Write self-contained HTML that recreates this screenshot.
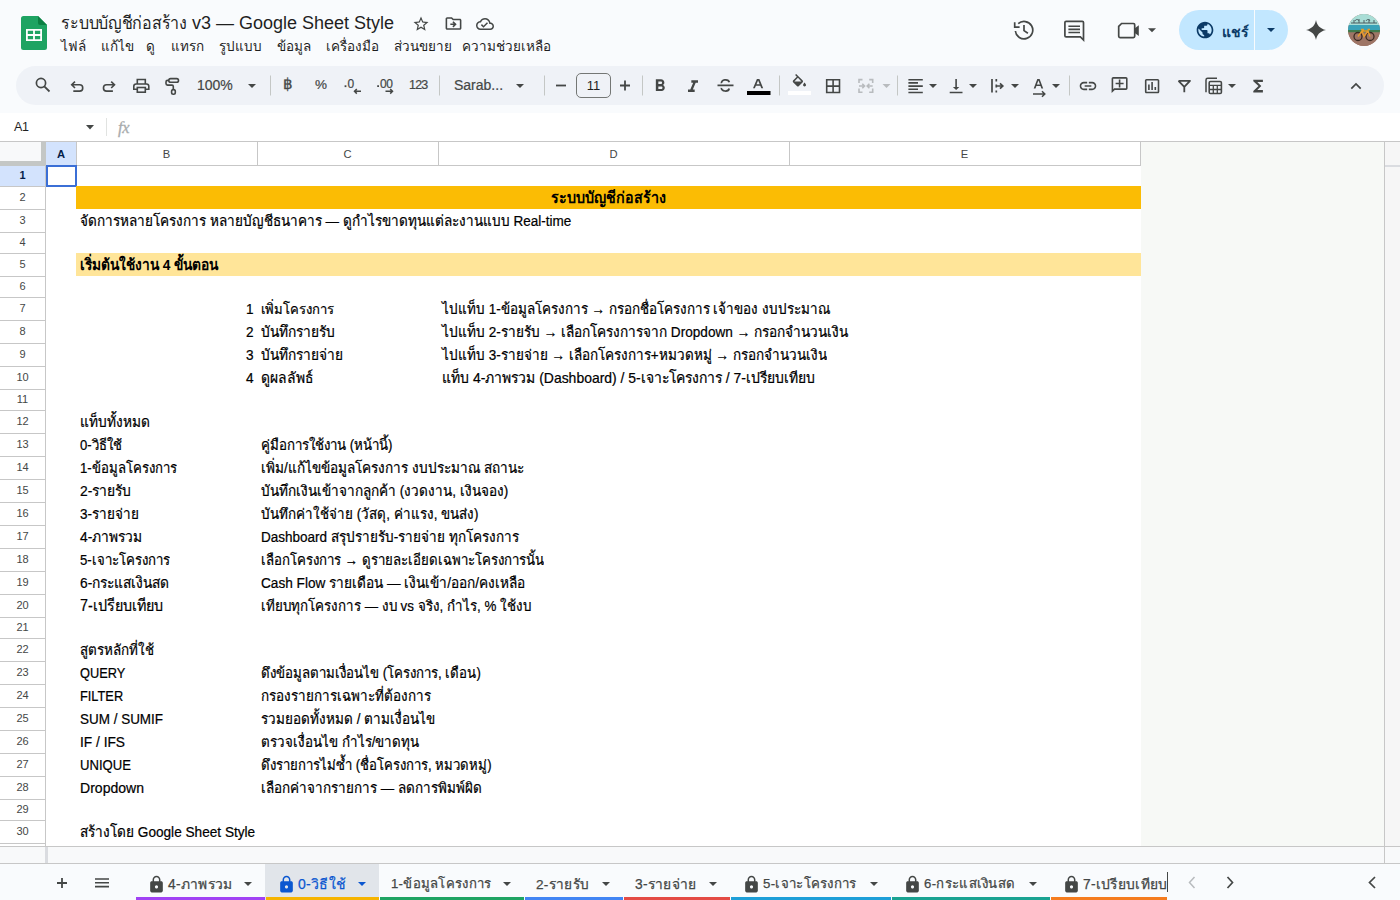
<!DOCTYPE html>
<html><head><meta charset="utf-8">
<style>
*{box-sizing:border-box;margin:0;padding:0}
html,body{width:1400px;height:900px;overflow:hidden;background:#f9fbfd;font-family:"Liberation Sans",sans-serif;color:#1f1f1f;position:relative}
.a{position:absolute;white-space:nowrap}
svg{position:absolute;display:block}
.ic{fill:#444746}
.tb{position:absolute;left:16px;top:65.5px;width:1368px;height:39.5px;background:#eff2f7;border-radius:20px}
.sep{position:absolute;top:75px;width:1px;height:20px;background:#c7c7c7}
.menu{top:35px;font-size:13.5px;color:#1f1f1f}
.fb{position:absolute;left:0;top:113px;width:1400px;height:29px;background:#fff}
.grid{position:absolute;left:0;top:141px;width:1400px;height:723px;background:#fff}
.ch{position:absolute;top:141px;height:25px;border-top:1px solid #c7c7c7;border-bottom:1px solid #c7c7c7;border-right:1px solid #c7c7c7;background:#fff;font-size:12px;color:#444746;text-align:center;line-height:23px}
.rh{position:absolute;left:0;width:46px;border-right:1px solid #c7c7c7;border-bottom:1px solid #c7c7c7;background:#fff;font-size:11px;color:#444746;text-align:center}
.c{position:absolute;font-size:14px;color:#000;white-space:nowrap;line-height:23px;-webkit-text-stroke:0.2px #000;transform:scaleY(1.1);transform-origin:0 16.5px;margin-top:1px}
.tab{position:absolute;top:864px;height:36px;font-size:14px;color:#444746;letter-spacing:0.6px}
.tab .bar{position:absolute;left:0;right:0;bottom:0;height:4px}
</style></head><body>

<!-- ===== HEADER ===== -->
<svg style="left:21px;top:16px" width="26" height="34" viewBox="0 0 26 34">
<path d="M2.5 0H17L26 9V31.5A2.5 2.5 0 0 1 23.5 34H2.5A2.5 2.5 0 0 1 0 31.5V2.5A2.5 2.5 0 0 1 2.5 0Z" fill="#0f9d58" style="fill:#1ea362"/>
<path d="M17 0L26 9H19A2 2 0 0 1 17 7Z" fill="#0b8043"/>
<path d="M5 13H21V25H5ZM6.8 14.8V18.1H12.1V14.8ZM13.9 14.8V18.1H19.2V14.8ZM6.8 19.9V23.2H12.1V19.9ZM13.9 19.9V23.2H19.2V19.9Z" fill="#fff" fill-rule="evenodd"/>
</svg>
<div class="a" style="left:61px;top:8px;font-size:18px;color:#1f1f1f;transform:scaleX(0.89);transform-origin:0 0">ระบบบัญชีก่อสร้าง</div>
<div class="a" style="left:192px;top:13px;font-size:18px;color:#1f1f1f">v3 — Google Sheet Style</div>


<svg style="left:412px;top:14.5px" width="18" height="18" viewBox="0 0 24 24"><path class="ic" d="M22 9.24l-7.19-.62L12 2 9.19 8.63 2 9.24l5.46 4.73L5.82 21 12 17.27 18.18 21l-1.63-7.03L22 9.24zM12 15.4l-3.76 2.27 1-4.28-3.32-2.88 4.38-.38L12 6.1l1.71 4.04 4.38.38-3.32 2.88 1 4.28L12 15.4z"/></svg>
<svg style="left:443.5px;top:14.3px" width="19" height="19" viewBox="0 0 24 24"><path class="ic" d="M20 6h-8l-2-2H4c-1.1 0-1.99.9-1.99 2L2 18c0 1.1.9 2 2 2h16c1.1 0 2-.9 2-2V8c0-1.1-.9-2-2-2zm0 12H4V6h5.17l2 2H20v10zm-7.84-6H8v2h4.16l-1.59 1.59L11.99 17 16 13.01 11.99 9l-1.41 1.41L12.16 12z"/></svg>
<svg style="left:476px;top:14.8px" width="18" height="18" viewBox="0 0 24 24"><path class="ic" d="M19.35 10.04C18.67 6.59 15.64 4 12 4 9.11 4 6.6 5.64 5.35 8.04 2.34 8.36 0 10.91 0 14c0 3.31 2.69 6 6 6h13c2.76 0 5-2.24 5-5 0-2.64-2.05-4.78-4.65-4.96zM19 18H6c-2.21 0-4-1.79-4-4 0-2.05 1.53-3.76 3.56-3.97l1.07-.11.5-.95C8.08 7.14 9.94 6 12 6c2.62 0 4.88 1.86 5.39 4.43l.3 1.5 1.53.11c1.56.1 2.78 1.41 2.78 2.96 0 1.65-1.35 3-3 3zM10 14.17l-2.09-2.09L6.5 13.5 10 17l6.01-6.01-1.41-1.41z"/></svg>

<div class="a menu" style="left:61px">ไฟล์</div>
<div class="a menu" style="left:101px">แก้ไข</div>
<div class="a menu" style="left:146px">ดู</div>
<div class="a menu" style="left:171px">แทรก</div>
<div class="a menu" style="left:219px">รูปแบบ</div>
<div class="a menu" style="left:277px">ข้อมูล</div>
<div class="a menu" style="left:326px">เครื่องมือ</div>
<div class="a menu" style="left:394px">ส่วนขยาย</div>
<div class="a menu" style="left:462px">ความช่วยเหลือ</div>

<!-- right header -->
<svg style="left:1000px;top:10px" width="170" height="40" viewBox="1000 10 170 40"><g fill="none" stroke="#444746" stroke-width="1.7">
<path d="M1015.4 31A8.7 8.7 0 1 0 1018.2 23.7"/><path d="M1014.7 22.3V27.2H1019.6"/><path d="M1024 25V30.6L1027.9 33.2"/>
<path d="M1064.9 22.6A1.2 1.2 0 0 1 1066.1 21.4H1082.3A1.2 1.2 0 0 1 1083.5 22.6V40L1080.4 36.9H1066.1A1.2 1.2 0 0 1 1064.9 35.7Z"/>
<path d="M1068.4 26.3H1080M1068.4 29.4H1080M1068.4 32.5H1080" stroke-width="1.6"/>
<path d="M1121.6 23.5H1133.4A1.3 1.3 0 0 1 1134.7 24.8V36.3A1.3 1.3 0 0 1 1133.4 37.6H1120A1.3 1.3 0 0 1 1118.7 36.3V26.4Z"/>
</g><g fill="#444746"><path d="M1134.5 28.5L1138.8 25.3V35.9L1134.5 32.7Z"/><path d="M1148 28.3H1156L1152 32.3Z"/></g></svg>
<div class="a" style="left:1179px;top:10px;width:109px;height:40px;border-radius:20px;background:#c2e7ff"></div>
<div class="a" style="left:1254px;top:10px;width:1px;height:40px;background:#f9fbfd"></div>
<svg style="left:1195px;top:20px" width="20" height="20" viewBox="0 0 24 24"><path fill="#0b3a66" d="M12 2C6.48 2 2 6.48 2 12s4.48 10 10 10 10-4.48 10-10S17.52 2 12 2zm-1 17.93c-3.950-.49-7-3.850-7-7.93 0-.62.08-1.21.21-1.79L9 15v1c0 1.1.9 2 2 2v1.93zm6.9-2.54c-.26-.81-1-1.39-1.9-1.39h-1v-3c0-.55-.45-1-1-1H8v-2h2c.55 0 1-.45 1-1V7h2c1.1 0 2-.9 2-2v-.41c2.93 1.19 5 4.06 5 7.41 0 2.08-.8 3.97-2.1 5.39z"/></svg>
<div class="a" style="left:1222px;top:21px;font-size:14px;font-weight:bold;color:#0b3a66">แชร์</div>
<svg style="left:1260px;top:20px" width="22" height="20" viewBox="0 0 22 20"><path fill="#0b3a66" d="M7 8H15L11 12Z"/></svg>
<svg style="left:1304px;top:18px" width="24" height="24" viewBox="0 0 24 24"><path fill="#444746" d="M12 2C12.9 7.1 15.8 10.6 22 12 15.8 13.4 12.9 16.9 12 22 11.1 16.9 8.2 13.4 2 12 8.2 10.6 11.1 7.1 12 2Z"/></svg>
<svg style="left:1348px;top:14px" width="32" height="32" viewBox="0 0 32 32"><defs><clipPath id="av"><circle cx="16" cy="16" r="16"/></clipPath></defs>
<g clip-path="url(#av)">
<rect width="32" height="32" fill="#a07a6b"/>
<rect width="32" height="11" fill="#a9ddd6"/>
<path d="M3 9h26M6 6v3M11 5v4M16 6v3M21 5v4M26 6v3M7 7c1-2 3-2 4 0M18 7c1-2 3-2 4 0" stroke="#4a5c60" stroke-width="1" fill="none"/>
<rect y="11" width="32" height="5" fill="#3aa2b8"/>
<rect y="16" width="32" height="2.5" fill="#3f7a4c"/>
<rect y="18.5" width="32" height="14" fill="#9e7566"/>
<circle cx="10" cy="22.5" r="4" fill="none" stroke="#3b2a22" stroke-width="1.3"/>
<circle cx="22" cy="22.5" r="4" fill="none" stroke="#3b2a22" stroke-width="1.3"/>
<path d="M10 22.5L14 17H20L22 22.5M14 17L16 22.5 20 17M13 15.5H16M19.5 15.5H22" stroke="#e79a2c" stroke-width="1.4" fill="none"/>
</g></svg>


<!-- ===== TOOLBAR ===== -->
<div class="tb"></div>
<svg style="left:0;top:0" width="1400" height="110" viewBox="0 0 1400 110">
<g fill="none" stroke="#444746" stroke-width="1.6" stroke-linecap="butt" stroke-linejoin="miter">
<!-- search -->
<circle cx="41" cy="83" r="4.6" stroke-width="1.7"/><path d="M44.3 86.3L49.5 91.5" stroke-width="1.8"/>
<!-- undo -->
<path d="M75 81.6L71.7 84.8 75 88M72 84.8H79.6A3.15 3.15 0 0 1 79.6 91.1H73.3"/>
<!-- redo -->
<path d="M111.2 81.6L114.5 84.8 111.2 88M114.2 84.8H106.6A3.15 3.15 0 0 0 106.6 91.1H112.9"/>
<!-- print -->
<path d="M137.3 83.8V79.5H145.3V83.8M137.3 89.3H133.8V86.3A2.3 2.3 0 0 1 136.1 84H146.5A2.3 2.3 0 0 1 148.8 86.3V89.3H145.3"/><rect x="137.3" y="87.5" width="8" height="4.7"/>
<!-- paint format -->
<rect x="168.8" y="78.6" width="9.7" height="3.6" rx="1.8"/><path d="M168.8 80.4H167.5A1.5 1.5 0 0 0 166 81.9V83.6A1.5 1.5 0 0 0 167.5 85.1H172A1.3 1.3 0 0 1 173.3 86.4V89.4"/><rect x="171.6" y="89.6" width="3.7" height="4.6" rx="1.7"/>
<!-- strikethrough -->
<path d="M717.5 85.3H733.5M721.5 83.3A3.7 2.7 0 0 1 729.3 82.3M721.4 87.8A3.7 2.7 0 0 0 729.2 88.5" stroke-width="1.7"/>
<!-- merge (disabled) -->
<path stroke="#b8bbbe" d="M859 83V79.6H862.5M859 88.5V92.3H862.5M872.7 83V79.6H869.2M872.7 88.5V92.3H869.2M859 86H864.5M862.3 83.8L864.5 86 862.3 88.2M872.7 86H867.2M869.4 83.8L867.2 86 869.4 88.2"/>
<!-- wrap -->
<path d="M992 79V92.5M996.3 79V81.5M996.3 84.5V87.5M996.3 90.5V92.5M996.5 86H1002.5M1000 83.3L1002.8 86 1000 88.7" stroke-width="1.7"/>
<!-- rotate A -->
<path d="M1033 94H1044.5M1042 91.3L1044.8 94 1042 96.7" stroke-width="1.5"/>
<!-- filter -->
<path d="M1178.5 80.8H1190L1184.3 86.8V92.2M1178.5 80.8L1184.3 86.8" stroke-width="1.8" stroke-linejoin="round"/>
<!-- functions/calc -->
<path d="M1206 92.3V80A1.7 1.7 0 0 1 1207.7 78.3H1217" stroke-width="1.5"/>
<rect x="1209.2" y="81.5" width="12.2" height="12" rx="1.3" stroke-width="1.6"/>
<path d="M1209.2 85.3H1221.4M1209.2 89.5H1221.4M1213.3 85.3V93.5M1217.3 85.3V93.5" stroke-width="1.3"/>
<!-- collapse ^ -->
<path d="M1351.3 88.7L1356 84 1360.7 88.7" stroke-width="1.7"/>
</g>
<g fill="#444746">
<!-- link -->
<path transform="translate(1078 76) scale(0.8333)" d="M3.9 12c0-1.71 1.39-3.1 3.1-3.1h4V7H7c-2.76 0-5 2.24-5 5s2.24 5 5 5h4v-1.9H7c-1.71 0-3.1-1.39-3.1-3.1zM8 13h8v-2H8v2zm9-6h-4v1.9h4c1.71 0 3.1 1.39 3.1 3.1s-1.39 3.1-3.1 3.1h-4V17h4c2.76 0 5-2.24 5-5s-2.24-5-5-5z"/>
<!-- B -->
<path transform="translate(650 76) scale(0.8333)" d="M15.6 10.79c.97-.67 1.65-1.77 1.65-2.79 0-2.26-1.75-4-4-4H7v14h7.04c2.09 0 3.71-1.7 3.71-3.79 0-1.52-.86-2.82-2.15-3.42zM10 6.5h3c.83 0 1.5.67 1.5 1.5s-.67 1.5-1.5 1.5h-3v-3zm3.5 9H10v-3h3.5c.83 0 1.5.67 1.5 1.5s-.67 1.5-1.5 1.5z"/>
<!-- I -->
<path transform="translate(683 77) scale(0.8333)" d="M10 4v3h2.21l-3.42 8H6v3h8v-3h-2.21l3.42-8H18V4z"/>
<!-- text color A -->
<path d="M756.9 79H759.4L763.2 88.3H761.3L760.3 85.8H755.9L754.9 88.3H753ZM756.5 84.3H759.7L758.1 80.6Z"/>
<rect x="747" y="91" width="23.5" height="4" fill="#000"/>
<!-- fill -->
<path transform="translate(790.5 74) scale(0.74)" d="M16.56 8.94L7.62 0 6.21 1.41l2.38 2.38-5.15 5.15c-.59.59-.59 1.54 0 2.12l5.5 5.5c.29.29.68.44 1.06.44s.77-.15 1.06-.44l5.5-5.5c.59-.58.59-1.53 0-2.12zM5.21 10L10 5.21 14.79 10H5.21zM19 11.5s-2 2.17-2 3.5c0 1.1.9 2 2 2s2-.9 2-2c0-1.33-2-3.5-2-3.5z"/>
<rect x="788" y="91" width="23" height="4" fill="#fff"/>
<!-- borders -->
<path transform="translate(823.5 76.5) scale(0.8)" d="M3 3v18h18V3H3zm8 16H5v-6h6v6zm0-8H5V5h6v6zm8 8h-6v-6h6v6zm0-8h-6V5h6v6z"/>
<!-- align left -->
<path transform="translate(906 76.5) scale(0.8)" d="M15 15H3v2h12v-2zm0-8H3v2h12V7zM3 13h18v-2H3v2zm0 8h18v-2H3v2zM3 3v2h18V3H3z"/>
<!-- valign bottom -->
<path transform="translate(946.5 76.5) scale(0.8)" d="M16 13h-3V3h-2v10H8l4 4 4-4zM4 19v2h16v-2H4z"/>
<!-- rotate A letter -->
<path d="M1037.3 79H1039.6L1043.2 88.5H1041.4L1040.5 86H1036.4L1035.5 88.5H1033.7ZM1036.9 84.5H1040L1038.45 80.6Z"/>
<!-- comment add -->
<path transform="translate(1110 75.5) scale(0.8) translate(24 0) scale(-1 1)" d="M22 4c0-1.1-.9-2-2-2H4c-1.1 0-1.99.9-1.99 2L2 16c0 1.1.9 2 2 2h14l4 4V4zm-2 13.17L18.83 16H4V4h16v13.17zM13 5h-2v4H7v2h4v4h2v-4h4V9h-4z"/>
<!-- chart -->
<path transform="translate(1142.5 76.5) scale(0.8)" d="M19 3H5c-1.1 0-2 .9-2 2v14c0 1.1.9 2 2 2h14c1.1 0 2-.9 2-2V5c0-1.1-.9-2-2-2zm0 16H5V5h14v14zM7 10h2v7H7zm4-3h2v10h-2zm4 6h2v4h-2z"/>
<!-- sigma -->
<path transform="translate(1248.5 76.5) scale(0.8)" d="M18 4H6v2l6.5 6L6 18v2h12v-3h-7l5-5-5-5h7z"/>
<!-- dropdown arrows -->
<path d="M248 84H256L252 88Z"/>
<path d="M516 84H524L520 88Z"/>
<path d="M929 84H937L933 88Z"/>
<path d="M969 84H977L973 88Z"/>
<path d="M1011 84H1019L1015 88Z"/>
<path d="M1052 84H1060L1056 88Z"/>
<path d="M1228 84H1236L1232 88Z"/>
<path fill="#b8bbbe" d="M882.5 84H890.5L886.5 88Z"/>
<!-- .0 arrows -->
<path d="M344.6 85.3h1.8v1.8h-1.8z"/><path d="M377.2 85.3h1.8v1.8h-1.8z"/>
</g>
<g fill="none" stroke="#444746" stroke-width="1.5">
<path d="M361 91.3H354.5M356.8 89L354.5 91.3 356.8 93.6"/>
<path d="M385.5 91.3H392.5M390.2 89L392.5 91.3 390.2 93.6"/>
<!-- minus plus -->
<path d="M556 85.5H566" stroke-width="1.8"/>
<path d="M620 85.5H630M625 80.5V90.5" stroke-width="1.8"/>
</g>
<g fill="#c4c7c5">
<rect x="270" y="75.5" width="1" height="20"/>
<rect x="439" y="75.5" width="1" height="20"/>
<rect x="544" y="75.5" width="1" height="20"/>
<rect x="642" y="75.5" width="1" height="20"/>
<rect x="779" y="75.5" width="1" height="20"/>
<rect x="897" y="75.5" width="1" height="20"/>
<rect x="1069" y="75.5" width="1" height="20"/>
</g>
<rect x="576.5" y="73.5" width="34" height="24" rx="4.5" fill="none" stroke="#747775" stroke-width="1"/>
</svg>
<div class="a" style="left:197px;top:77px;font-size:14px;color:#444746;-webkit-text-stroke:0.2px #444746">100%</div>
<div class="a" style="left:283px;top:76px;font-size:14.5px;color:#444746;-webkit-text-stroke:0.3px #444746">฿</div>
<div class="a" style="left:315px;top:77px;font-size:13.5px;color:#444746;-webkit-text-stroke:0.2px #444746">%</div>
<div class="a" style="left:347.5px;top:77px;font-size:12px;color:#444746;-webkit-text-stroke:0.2px #444746">0</div>
<div class="a" style="left:380px;top:77px;font-size:12px;color:#444746;letter-spacing:-0.4px;-webkit-text-stroke:0.2px #444746">00</div>
<div class="a" style="left:409px;top:78px;font-size:12.5px;color:#444746;letter-spacing:-0.8px;-webkit-text-stroke:0.2px #444746">123</div>
<div class="a" style="left:454px;top:77px;font-size:14px;color:#444746;-webkit-text-stroke:0.2px #444746">Sarab...</div>
<div class="a" style="left:576px;top:73px;width:35px;height:25px;font-size:13px;color:#1f1f1f;text-align:center;line-height:25px">11</div>

<!-- ===== FORMULA BAR ===== -->
<div class="fb"></div>
<div class="a" style="left:14px;top:120px;font-size:12.5px;letter-spacing:-0.4px;color:#1f1f1f">A1</div>
<svg style="left:80px;top:118px" width="20" height="18" viewBox="0 0 20 18"><path fill="#444746" d="M6 7H14L10 11.5Z"/></svg>
<div class="a" style="left:106px;top:118px;width:1px;height:18px;background:#e1e3e1"></div>
<div class="a" style="left:118px;top:118px;font-size:16.5px;font-style:italic;color:#a8abad;font-family:'Liberation Serif',serif;letter-spacing:-0.3px;-webkit-text-stroke:0.3px #a8abad">fx</div>

<!-- ===== GRID ===== -->
<div class="a" style="left:0;top:141px;width:1400px;height:723px;background:#fff"></div>
<div class="a" style="left:1141px;top:142px;width:244px;height:704px;background:#f7f9f6"></div>
<div class="a" style="left:1384px;top:141px;width:1px;height:722px;background:#c7c7c7"></div>
<div class="a" style="left:1385px;top:142px;width:15px;height:704px;background:#f6f6f6"></div>
<div class="a" style="left:1385px;top:165px;width:15px;height:2px;background:#dadce0"></div>
<div class="a" style="left:0;top:141px;width:1400px;height:1px;background:#c7c7c7"></div>
<div class="a" style="left:0;top:165px;width:1141px;height:1px;background:#c7c7c7"></div>
<!-- corner -->
<div class="a" style="left:0;top:142px;width:46px;height:23px;background:#f8f9fa"></div>
<div class="a" style="left:41px;top:142px;width:5px;height:23px;background:#c4c7c5"></div>
<div class="a" style="left:0;top:161px;width:46px;height:5px;background:#c4c7c5"></div>
<!-- col headers -->
<div class="a" style="left:46px;top:142px;width:30px;height:23px;background:#d3e3fd"></div>

<div class="a" style="left:46px;top:142px;width:30px;height:23px;line-height:24px;text-align:center;font-size:11.2px;font-weight:bold;color:#041e49">A</div>
<div class="a" style="left:76px;top:142px;width:1px;height:23px;background:#c7c7c7"></div>
<div class="a" style="left:76px;top:142px;width:181px;height:23px;line-height:24px;text-align:center;font-size:11.2px;color:#444746">B</div>
<div class="a" style="left:257px;top:142px;width:1px;height:23px;background:#c7c7c7"></div>
<div class="a" style="left:257px;top:142px;width:181px;height:23px;line-height:24px;text-align:center;font-size:11.2px;color:#444746">C</div>
<div class="a" style="left:438px;top:142px;width:1px;height:23px;background:#c7c7c7"></div>
<div class="a" style="left:438px;top:142px;width:351px;height:23px;line-height:24px;text-align:center;font-size:11.2px;color:#444746">D</div>
<div class="a" style="left:789px;top:142px;width:1px;height:23px;background:#c7c7c7"></div>
<div class="a" style="left:789px;top:142px;width:351px;height:23px;line-height:24px;text-align:center;font-size:11.2px;color:#444746">E</div>
<div class="a" style="left:1140px;top:142px;width:1px;height:23px;background:#c7c7c7"></div>
<div class="a" style="left:45px;top:165px;width:1px;height:681px;background:#c7c7c7"></div>
<div class="a" style="left:0;top:166px;width:45px;height:20px;background:#d3e3fd"></div>
<div class="a" style="left:0;top:165px;width:45px;height:21px;line-height:21px;text-align:center;font-size:11px;font-weight:bold;color:#041e49">1</div>
<div class="a" style="left:0;top:186px;width:45px;height:1px;background:#c7c7c7"></div>
<div class="a" style="left:0;top:186px;width:45px;height:23px;line-height:23px;text-align:center;font-size:11px;color:#444746">2</div>
<div class="a" style="left:0;top:209px;width:45px;height:1px;background:#c7c7c7"></div>
<div class="a" style="left:0;top:209px;width:45px;height:23px;line-height:23px;text-align:center;font-size:11px;color:#444746">3</div>
<div class="a" style="left:0;top:232px;width:45px;height:1px;background:#c7c7c7"></div>
<div class="a" style="left:0;top:232px;width:45px;height:21px;line-height:21px;text-align:center;font-size:11px;color:#444746">4</div>
<div class="a" style="left:0;top:253px;width:45px;height:1px;background:#c7c7c7"></div>
<div class="a" style="left:0;top:253px;width:45px;height:23px;line-height:23px;text-align:center;font-size:11px;color:#444746">5</div>
<div class="a" style="left:0;top:276px;width:45px;height:1px;background:#c7c7c7"></div>
<div class="a" style="left:0;top:276px;width:45px;height:21px;line-height:21px;text-align:center;font-size:11px;color:#444746">6</div>
<div class="a" style="left:0;top:297px;width:45px;height:1px;background:#c7c7c7"></div>
<div class="a" style="left:0;top:297px;width:45px;height:23px;line-height:23px;text-align:center;font-size:11px;color:#444746">7</div>
<div class="a" style="left:0;top:320px;width:45px;height:1px;background:#c7c7c7"></div>
<div class="a" style="left:0;top:320px;width:45px;height:23px;line-height:23px;text-align:center;font-size:11px;color:#444746">8</div>
<div class="a" style="left:0;top:343px;width:45px;height:1px;background:#c7c7c7"></div>
<div class="a" style="left:0;top:343px;width:45px;height:23px;line-height:23px;text-align:center;font-size:11px;color:#444746">9</div>
<div class="a" style="left:0;top:366px;width:45px;height:1px;background:#c7c7c7"></div>
<div class="a" style="left:0;top:366px;width:45px;height:23px;line-height:23px;text-align:center;font-size:11px;color:#444746">10</div>
<div class="a" style="left:0;top:389px;width:45px;height:1px;background:#c7c7c7"></div>
<div class="a" style="left:0;top:389px;width:45px;height:21px;line-height:21px;text-align:center;font-size:11px;color:#444746">11</div>
<div class="a" style="left:0;top:410px;width:45px;height:1px;background:#c7c7c7"></div>
<div class="a" style="left:0;top:410px;width:45px;height:23px;line-height:23px;text-align:center;font-size:11px;color:#444746">12</div>
<div class="a" style="left:0;top:433px;width:45px;height:1px;background:#c7c7c7"></div>
<div class="a" style="left:0;top:433px;width:45px;height:23px;line-height:23px;text-align:center;font-size:11px;color:#444746">13</div>
<div class="a" style="left:0;top:456px;width:45px;height:1px;background:#c7c7c7"></div>
<div class="a" style="left:0;top:456px;width:45px;height:23px;line-height:23px;text-align:center;font-size:11px;color:#444746">14</div>
<div class="a" style="left:0;top:479px;width:45px;height:1px;background:#c7c7c7"></div>
<div class="a" style="left:0;top:479px;width:45px;height:23px;line-height:23px;text-align:center;font-size:11px;color:#444746">15</div>
<div class="a" style="left:0;top:502px;width:45px;height:1px;background:#c7c7c7"></div>
<div class="a" style="left:0;top:502px;width:45px;height:23px;line-height:23px;text-align:center;font-size:11px;color:#444746">16</div>
<div class="a" style="left:0;top:525px;width:45px;height:1px;background:#c7c7c7"></div>
<div class="a" style="left:0;top:525px;width:45px;height:23px;line-height:23px;text-align:center;font-size:11px;color:#444746">17</div>
<div class="a" style="left:0;top:548px;width:45px;height:1px;background:#c7c7c7"></div>
<div class="a" style="left:0;top:548px;width:45px;height:23px;line-height:23px;text-align:center;font-size:11px;color:#444746">18</div>
<div class="a" style="left:0;top:571px;width:45px;height:1px;background:#c7c7c7"></div>
<div class="a" style="left:0;top:571px;width:45px;height:23px;line-height:23px;text-align:center;font-size:11px;color:#444746">19</div>
<div class="a" style="left:0;top:594px;width:45px;height:1px;background:#c7c7c7"></div>
<div class="a" style="left:0;top:594px;width:45px;height:23px;line-height:23px;text-align:center;font-size:11px;color:#444746">20</div>
<div class="a" style="left:0;top:617px;width:45px;height:1px;background:#c7c7c7"></div>
<div class="a" style="left:0;top:617px;width:45px;height:21px;line-height:21px;text-align:center;font-size:11px;color:#444746">21</div>
<div class="a" style="left:0;top:638px;width:45px;height:1px;background:#c7c7c7"></div>
<div class="a" style="left:0;top:638px;width:45px;height:23px;line-height:23px;text-align:center;font-size:11px;color:#444746">22</div>
<div class="a" style="left:0;top:661px;width:45px;height:1px;background:#c7c7c7"></div>
<div class="a" style="left:0;top:661px;width:45px;height:23px;line-height:23px;text-align:center;font-size:11px;color:#444746">23</div>
<div class="a" style="left:0;top:684px;width:45px;height:1px;background:#c7c7c7"></div>
<div class="a" style="left:0;top:684px;width:45px;height:23px;line-height:23px;text-align:center;font-size:11px;color:#444746">24</div>
<div class="a" style="left:0;top:707px;width:45px;height:1px;background:#c7c7c7"></div>
<div class="a" style="left:0;top:707px;width:45px;height:23px;line-height:23px;text-align:center;font-size:11px;color:#444746">25</div>
<div class="a" style="left:0;top:730px;width:45px;height:1px;background:#c7c7c7"></div>
<div class="a" style="left:0;top:730px;width:45px;height:23px;line-height:23px;text-align:center;font-size:11px;color:#444746">26</div>
<div class="a" style="left:0;top:753px;width:45px;height:1px;background:#c7c7c7"></div>
<div class="a" style="left:0;top:753px;width:45px;height:23px;line-height:23px;text-align:center;font-size:11px;color:#444746">27</div>
<div class="a" style="left:0;top:776px;width:45px;height:1px;background:#c7c7c7"></div>
<div class="a" style="left:0;top:776px;width:45px;height:23px;line-height:23px;text-align:center;font-size:11px;color:#444746">28</div>
<div class="a" style="left:0;top:799px;width:45px;height:1px;background:#c7c7c7"></div>
<div class="a" style="left:0;top:799px;width:45px;height:21px;line-height:21px;text-align:center;font-size:11px;color:#444746">29</div>
<div class="a" style="left:0;top:820px;width:45px;height:1px;background:#c7c7c7"></div>
<div class="a" style="left:0;top:820px;width:45px;height:23px;line-height:23px;text-align:center;font-size:11px;color:#444746">30</div>
<div class="a" style="left:0;top:843px;width:45px;height:1px;background:#c7c7c7"></div>
<div class="a" style="left:0;top:846px;width:1400px;height:1px;background:#c7c7c7"></div>
<div class="a" style="left:0;top:847px;width:1400px;height:16px;background:#f8f9fa"></div>
<div class="a" style="left:45px;top:847px;width:3px;height:16px;background:#dadce0"></div>
<div class="a" style="left:0;top:863px;width:1400px;height:1px;background:#c7c7c7"></div>
<!-- selection A1 -->
<div class="a" style="left:46px;top:165px;width:31px;height:22px;border:2px solid #3b6fd6"></div>

<div class="a" style="left:76px;top:186px;width:1065px;height:23px;background:#fbbc04"></div>
<div class="a" style="left:76px;top:253px;width:1065px;height:23px;background:#ffe599"></div>
<!-- ===== CELLS ===== -->
<div class="c" style="left:551px;top:186px;font-size:14.30px;font-weight:bold;-webkit-text-stroke:0">ระบบบัญชีก่อสร้าง</div>
<div class="c" style="left:80px;top:209px;font-size:13.52px">จัดการหลายโครงการ หลายบัญชีธนาคาร — ดูกำไรขาดทุนแต่ละงานแบบ Real-time</div>
<div class="c" style="left:80px;top:253px;font-size:13.76px;font-weight:bold;-webkit-text-stroke:0">เริ่มต้นใช้งาน 4 ขั้นตอน</div>
<div class="c" style="left:246px;top:297px;font-size:13.60px">1</div>
<div class="c" style="left:261px;top:297px;font-size:13.08px">เพิ่มโครงการ</div>
<div class="c" style="left:442px;top:297px;font-size:13.45px">ไปแท็บ 1-ข้อมูลโครงการ → กรอกชื่อโครงการ เจ้าของ งบประมาณ</div>
<div class="c" style="left:246px;top:320px;font-size:13.60px">2</div>
<div class="c" style="left:261px;top:320px;font-size:13.75px">บันทึกรายรับ</div>
<div class="c" style="left:442px;top:320px;font-size:13.61px">ไปแท็บ 2-รายรับ → เลือกโครงการจาก Dropdown → กรอกจำนวนเงิน</div>
<div class="c" style="left:246px;top:343px;font-size:13.60px">3</div>
<div class="c" style="left:261px;top:343px;font-size:13.68px">บันทึกรายจ่าย</div>
<div class="c" style="left:442px;top:343px;font-size:13.50px">ไปแท็บ 3-รายจ่าย → เลือกโครงการ+หมวดหมู่ → กรอกจำนวนเงิน</div>
<div class="c" style="left:246px;top:366px;font-size:13.60px">4</div>
<div class="c" style="left:261px;top:366px;font-size:13.88px">ดูผลลัพธ์</div>
<div class="c" style="left:442px;top:366px;font-size:13.96px">แท็บ 4-ภาพรวม (Dashboard) / 5-เจาะโครงการ / 7-เปรียบเทียบ</div>
<div class="c" style="left:80px;top:410px;font-size:13.69px">แท็บทั้งหมด</div>
<div class="c" style="left:80px;top:433px;font-size:13.10px">0-วิธีใช้</div>
<div class="c" style="left:261px;top:433px;font-size:13.30px">คู่มือการใช้งาน (หน้านี้)</div>
<div class="c" style="left:80px;top:456px;font-size:13.18px">1-ข้อมูลโครงการ</div>
<div class="c" style="left:261px;top:456px;font-size:13.58px">เพิ่ม/แก้ไขข้อมูลโครงการ งบประมาณ สถานะ</div>
<div class="c" style="left:80px;top:479px;font-size:13.86px">2-รายรับ</div>
<div class="c" style="left:261px;top:479px;font-size:13.56px">บันทึกเงินเข้าจากลูกค้า (งวดงาน, เงินจอง)</div>
<div class="c" style="left:80px;top:502px;font-size:13.51px">3-รายจ่าย</div>
<div class="c" style="left:261px;top:502px;font-size:13.41px">บันทึกค่าใช้จ่าย (วัสดุ, ค่าแรง, ขนส่ง)</div>
<div class="c" style="left:80px;top:525px;font-size:13.78px">4-ภาพรวม</div>
<div class="c" style="left:261px;top:525px;font-size:13.53px">Dashboard สรุปรายรับ-รายจ่าย ทุกโครงการ</div>
<div class="c" style="left:80px;top:548px;font-size:13.21px">5-เจาะโครงการ</div>
<div class="c" style="left:261px;top:548px;font-size:13.24px">เลือกโครงการ → ดูรายละเอียดเฉพาะโครงการนั้น</div>
<div class="c" style="left:80px;top:571px;font-size:13.76px">6-กระแสเงินสด</div>
<div class="c" style="left:261px;top:571px;font-size:13.63px">Cash Flow รายเดือน — เงินเข้า/ออก/คงเหลือ</div>
<div class="c" style="left:80px;top:594px;font-size:14.30px">7-เปรียบเทียบ</div>
<div class="c" style="left:261px;top:594px;font-size:13.37px">เทียบทุกโครงการ — งบ vs จริง, กำไร, % ใช้งบ</div>
<div class="c" style="left:80px;top:638px;font-size:13.42px">สูตรหลักที่ใช้</div>
<div class="c" style="left:80px;top:661px;font-size:12.80px">QUERY</div>
<div class="c" style="left:261px;top:661px;font-size:13.23px">ดึงข้อมูลตามเงื่อนไข (โครงการ, เดือน)</div>
<div class="c" style="left:80px;top:684px;font-size:12.80px">FILTER</div>
<div class="c" style="left:261px;top:684px;font-size:13.48px">กรองรายการเฉพาะที่ต้องการ</div>
<div class="c" style="left:80px;top:707px;font-size:13.47px">SUM / SUMIF</div>
<div class="c" style="left:261px;top:707px;font-size:13.49px">รวมยอดทั้งหมด / ตามเงื่อนไข</div>
<div class="c" style="left:80px;top:730px;font-size:13.74px">IF / IFS</div>
<div class="c" style="left:261px;top:730px;font-size:13.37px">ตรวจเงื่อนไข กำไร/ขาดทุน</div>
<div class="c" style="left:80px;top:753px;font-size:13.12px">UNIQUE</div>
<div class="c" style="left:261px;top:753px;font-size:13.14px">ดึงรายการไม่ซ้ำ (ชื่อโครงการ, หมวดหมู่)</div>
<div class="c" style="left:80px;top:776px;font-size:14.05px">Dropdown</div>
<div class="c" style="left:261px;top:776px;font-size:13.47px">เลือกค่าจากรายการ — ลดการพิมพ์ผิด</div>
<div class="c" style="left:80px;top:820px;font-size:13.63px">สร้างโดย Google Sheet Style</div>
<!-- ===== TABS ===== -->
<div class="a" style="left:0;top:864px;width:1400px;height:36px;background:#f9fbfd"></div>
<svg style="left:0;top:860px" width="1400" height="40" viewBox="0 860 1400 40"><g fill="none" stroke="#444746" stroke-width="1.5">
<path d="M57 883H67M62 878V888" stroke-width="1.8"/>
<path d="M95 879H109M95 882.8H109M95 886.6H109" stroke-width="1.6"/>
<path d="M1194.5 877L1189.5 882.5 1194.5 888" stroke="#b8bbbe"/>
<path d="M1227.5 877L1232.5 882.5 1227.5 888" stroke-width="1.7"/>
<path d="M1375 877L1369.5 882.5 1375 888" stroke-width="1.7"/>
</g></svg>
<div class="a" style="left:136px;top:897px;width:129px;height:3px;background:#a142f4"></div>
<svg style="left:147px;top:875px" width="19" height="19" viewBox="0 0 24 24"><path fill="#444746" d="M18 8h-1V6c0-2.76-2.24-5-5-5S7 3.24 7 6v2H6c-1.1 0-2 .9-2 2v10c0 1.1.9 2 2 2h12c1.1 0 2-.9 2-2V10c0-1.1-.9-2-2-2zm-6 9c-1.1 0-2-.9-2-2s.9-2 2-2 2 .9 2 2-.9 2-2 2zm3.1-9H8.9V6c0-1.71 1.39-3.1 3.1-3.1 1.71 0 3.1 1.39 3.1 3.1v2z"/></svg>
<div class="a" style="left:168px;top:873px;font-size:13.82px;color:#444746;letter-spacing:0.3px;-webkit-text-stroke:0.25px #444746">4-ภาพรวม</div>
<svg style="left:239px;top:874px" width="18" height="18" viewBox="0 0 18 18"><path fill="#444746" d="M5 8H13L9 12Z"/></svg>
<div class="a" style="left:265px;top:864px;width:114px;height:36px;background:#e1e5ea"></div>
<div class="a" style="left:266px;top:897px;width:113px;height:3px;background:#f6b400"></div>
<svg style="left:277px;top:875px" width="19" height="19" viewBox="0 0 24 24"><path fill="#0b57d0" d="M18 8h-1V6c0-2.76-2.24-5-5-5S7 3.24 7 6v2H6c-1.1 0-2 .9-2 2v10c0 1.1.9 2 2 2h12c1.1 0 2-.9 2-2V10c0-1.1-.9-2-2-2zm-6 9c-1.1 0-2-.9-2-2s.9-2 2-2 2 .9 2 2-.9 2-2 2zm3.1-9H8.9V6c0-1.71 1.39-3.1 3.1-3.1 1.71 0 3.1 1.39 3.1 3.1v2z"/></svg>
<div class="a" style="left:298px;top:873px;font-size:14.00px;color:#0b57d0;letter-spacing:0.3px;-webkit-text-stroke:0.25px #0b57d0">0-วิธีใช้</div>
<svg style="left:353px;top:874px" width="18" height="18" viewBox="0 0 18 18"><path fill="#0b57d0" d="M5 8H13L9 12Z"/></svg>
<div class="a" style="left:380px;top:897px;width:144px;height:3px;background:#1fa463"></div>
<div class="a" style="left:391px;top:873px;font-size:13.13px;color:#444746;letter-spacing:0.3px;-webkit-text-stroke:0.25px #444746">1-ข้อมูลโครงการ</div>
<svg style="left:498px;top:874px" width="18" height="18" viewBox="0 0 18 18"><path fill="#444746" d="M5 8H13L9 12Z"/></svg>
<div class="a" style="left:525px;top:897px;width:98px;height:3px;background:#4285f4"></div>
<div class="a" style="left:536px;top:873px;font-size:13.61px;color:#444746;letter-spacing:0.3px;-webkit-text-stroke:0.25px #444746">2-รายรับ</div>
<svg style="left:597px;top:874px" width="18" height="18" viewBox="0 0 18 18"><path fill="#444746" d="M5 8H13L9 12Z"/></svg>
<div class="a" style="left:624px;top:897px;width:106px;height:3px;background:#e44b45"></div>
<div class="a" style="left:635px;top:873px;font-size:13.80px;color:#444746;letter-spacing:0.3px;-webkit-text-stroke:0.25px #444746">3-รายจ่าย</div>
<svg style="left:704px;top:874px" width="18" height="18" viewBox="0 0 18 18"><path fill="#444746" d="M5 8H13L9 12Z"/></svg>
<div class="a" style="left:731px;top:897px;width:160px;height:3px;background:#1e9fd8"></div>
<svg style="left:742px;top:875px" width="19" height="19" viewBox="0 0 24 24"><path fill="#444746" d="M18 8h-1V6c0-2.76-2.24-5-5-5S7 3.24 7 6v2H6c-1.1 0-2 .9-2 2v10c0 1.1.9 2 2 2h12c1.1 0 2-.9 2-2V10c0-1.1-.9-2-2-2zm-6 9c-1.1 0-2-.9-2-2s.9-2 2-2 2 .9 2 2-.9 2-2 2zm3.1-9H8.9V6c0-1.71 1.39-3.1 3.1-3.1 1.71 0 3.1 1.39 3.1 3.1v2z"/></svg>
<div class="a" style="left:763px;top:873px;font-size:13.26px;color:#444746;letter-spacing:0.3px;-webkit-text-stroke:0.25px #444746">5-เจาะโครงการ</div>
<svg style="left:865px;top:874px" width="18" height="18" viewBox="0 0 18 18"><path fill="#444746" d="M5 8H13L9 12Z"/></svg>
<div class="a" style="left:892px;top:897px;width:158px;height:3px;background:#1aa392"></div>
<svg style="left:903px;top:875px" width="19" height="19" viewBox="0 0 24 24"><path fill="#444746" d="M18 8h-1V6c0-2.76-2.24-5-5-5S7 3.24 7 6v2H6c-1.1 0-2 .9-2 2v10c0 1.1.9 2 2 2h12c1.1 0 2-.9 2-2V10c0-1.1-.9-2-2-2zm-6 9c-1.1 0-2-.9-2-2s.9-2 2-2 2 .9 2 2-.9 2-2 2zm3.1-9H8.9V6c0-1.71 1.39-3.1 3.1-3.1 1.71 0 3.1 1.39 3.1 3.1v2z"/></svg>
<div class="a" style="left:924px;top:873px;font-size:13.22px;color:#444746;letter-spacing:0.3px;-webkit-text-stroke:0.25px #444746">6-กระแสเงินสด</div>
<svg style="left:1024px;top:874px" width="18" height="18" viewBox="0 0 18 18"><path fill="#444746" d="M5 8H13L9 12Z"/></svg>
<div class="a" style="left:1051px;top:897px;width:116px;height:3px;background:#f57c1f"></div>
<svg style="left:1062px;top:875px" width="19" height="19" viewBox="0 0 24 24"><path fill="#444746" d="M18 8h-1V6c0-2.76-2.24-5-5-5S7 3.24 7 6v2H6c-1.1 0-2 .9-2 2v10c0 1.1.9 2 2 2h12c1.1 0 2-.9 2-2V10c0-1.1-.9-2-2-2zm-6 9c-1.1 0-2-.9-2-2s.9-2 2-2 2 .9 2 2-.9 2-2 2zm3.1-9H8.9V6c0-1.71 1.39-3.1 3.1-3.1 1.71 0 3.1 1.39 3.1 3.1v2z"/></svg>
<div class="a" style="left:1083px;top:873px;width:84px;overflow:hidden;font-size:13.8px;color:#444746;letter-spacing:0.3px;-webkit-text-stroke:0.25px #444746">7-เปรียบเทียบ</div>
<div class="a" style="left:1167px;top:872px;width:1px;height:20px;background:#444746"></div>
<div class="a" style="left:1384px;top:846px;width:1px;height:17px;background:#c7c7c7"></div>
</body></html>
